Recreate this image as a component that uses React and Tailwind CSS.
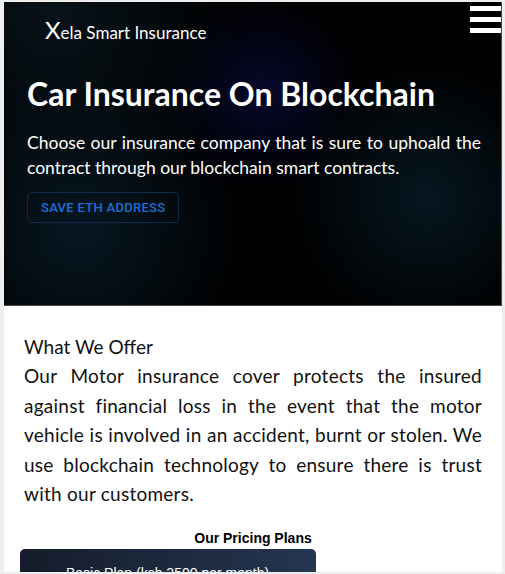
import React from 'react';

const FONT = { fontFamily: 'Lato, "Noto Sans", sans-serif' };

function Hamburger() {
  return (
    <div className="flex flex-col gap-[6px] w-[31px] pt-[4px]">
      <span className="block h-[5px] bg-white" />
      <span className="block h-[5px] bg-white" />
      <span className="block h-[5px] bg-white" />
    </div>
  );
}

export default function App() {
  return (
    <div className="w-[505px] h-[574px] overflow-hidden bg-[#eeeeee] pl-[4px] pt-[2px] pr-[3px] pb-[2px]">
      <div className="h-full bg-white overflow-hidden">
        {/* Hero */}
        <section
          className="h-[304px] border-b border-r border-[#4b4b4b] bg-black bg-[radial-gradient(circle_at_52%_30%,#06082a_0%,transparent_30%),radial-gradient(circle_at_15%_75%,#071722_0%,transparent_35%),radial-gradient(circle_at_85%_65%,#061620_0%,transparent_30%),radial-gradient(circle_at_10%_5%,#071219_0%,transparent_35%)] pl-[23px] pr-[20px] text-white"
          style={FONT}
        >
          <div className="flex items-start justify-between">
            <div className="pl-[18px] pt-[16px] text-[17px] leading-none">
              <span className="text-[24px]">X</span>ela Smart Insurance
            </div>
            <div className="-mr-[20px]">
              <Hamburger />
            </div>
          </div>
          <h1 className="mt-[32px] text-[32px] font-bold leading-tight">
            Car Insurance On Blockchain
          </h1>
          <p className="mt-[16px] text-[17.5px] leading-[25px] text-justify">
            Choose our insurance company that is sure to uphoald the contract through our blockchain smart contracts.
          </p>
          <button
            className="mt-[12px] h-[31px] px-[13px] rounded border border-[#0f2a4a] text-[#1d6fd6] text-[13px] tracking-[0.3px] uppercase"
            style={{ fontFamily: 'Roboto, sans-serif', fontWeight: 500 }}
          >
            Save ETH Address
          </button>
        </section>

        {/* What we offer */}
        <section className="px-[20px] pt-[27px] text-[#111]" style={FONT}>
          <h2 className="text-[19px] leading-[28px]">What We Offer</h2>
          <p className="text-[19px] leading-[29.5px] text-justify tracking-[0.25px]">
            Our Motor insurance cover protects the insured against financial loss in the event that the motor vehicle is involved in an accident, burnt or stolen. We use blockchain technology to ensure there is trust with our customers.
          </p>
        </section>

        {/* Pricing */}
        <section className="pt-[19px]" style={{ fontFamily: '"Liberation Sans", Arial, sans-serif' }}>
          <h3 className="text-center text-[14px] font-bold text-black">Our Pricing Plans</h3>
          <div className="ml-[16px] w-[296px] h-[60px] rounded-t-[5px] bg-[linear-gradient(90deg,#151c2b,#243650)] pt-[14px] pl-[46px] text-white text-[14px]">
            Basic Plan (ksh 2500 per month)
          </div>
        </section>
      </div>
    </div>
  );
}
